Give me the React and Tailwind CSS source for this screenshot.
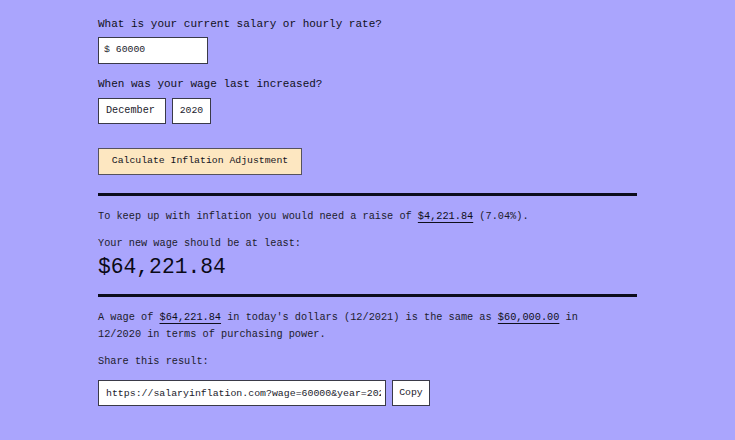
import React from "react";

const mono = { fontFamily: '"Liberation Mono", "DejaVu Sans Mono", monospace' };

export default function App() {
  return (
    <div className="min-h-[440px] w-full bg-[#aaa5fd] text-[#14141f]" style={mono}>
      <div className="mx-auto w-[539px] pt-[16px] pb-[34px]">
        <div className="text-[11px] leading-[16px] text-[#10101a]">What is your current salary or hourly rate?</div>
        <div className="mt-[5px] flex h-[27px] w-[110px] items-center border-[1.5px] border-[#3a3a48] bg-white pl-[5px] text-[9.8px] text-[#22222c]">
          $ 60000
        </div>

        <div className="mt-[12px] text-[11px] leading-[16px] text-[#10101a]">When was your wage last increased?</div>
        <div className="mt-[6px] flex gap-[6px]">
          <div className="flex h-[26px] w-[68px] items-center border-[1.5px] border-[#3a3a48] bg-white pl-[7px] text-[10.2px] text-[#22222c]">
            December
          </div>
          <div className="flex h-[26px] w-[39px] items-center justify-center border-[1.5px] border-[#3a3a48] bg-white text-[9.8px] text-[#22222c]">
            2020
          </div>
        </div>

        <button className="mt-[24px] flex h-[27px] w-[204px] items-center justify-center border-[1.5px] border-[#55525e] bg-[#fde7c1] text-[9.8px] text-[#14141c]" style={mono}>
          Calculate Inflation Adjustment
        </button>

        <div className="mt-[18px] h-[3px] w-full bg-[#0c0c1c]" />

        <div className="mt-[12px] text-[10.25px] leading-[16px] text-[#1c1c2c]">
          To keep up with inflation you would need a raise of{" "}
          <span className="text-[#0e0e1a] underline decoration-1 underline-offset-[3px]">$4,221.84</span> (7.04%).
        </div>

        <div className="mt-[11px] text-[10.25px] leading-[16px] text-[#1c1c2c]">Your new wage should be at least:</div>
        <div className="mt-[3px] text-[21.3px] leading-[26px] text-[#0a0a16]">$64,221.84</div>

        <div className="mt-[14px] h-[3px] w-full bg-[#0c0c1c]" />

        <div className="mt-[12px] text-[10.25px] leading-[16.6px] text-[#1c1c2c]">
          A wage of <span className="text-[#0e0e1a] underline decoration-1 underline-offset-[3px]">$64,221.84</span> in
          today's dollars (12/2021) is the same as{" "}
          <span className="text-[#0e0e1a] underline decoration-1 underline-offset-[3px]">$60,000.00</span> in
          <br />
          12/2020 in terms of purchasing power.
        </div>

        <div className="mt-[11px] text-[10.25px] leading-[16px] text-[#1c1c2c]">Share this result:</div>

        <div className="mt-[11px] flex gap-[6px]">
          <input
            readOnly
            value="https://salaryinflation.com?wage=60000&year=2020&month=12"
            className="h-[26px] w-[288px] border-[1.5px] border-[#3a3a48] bg-white pl-[7px] pr-[4px] text-[9.9px] text-[#22222c] outline-none"
            style={mono}
          />
          <button className="flex h-[26px] w-[38px] items-center justify-center border-[1.5px] border-[#3a3a48] bg-white text-[9.8px] text-[#22222c]" style={mono}>
            Copy
          </button>
        </div>
      </div>
    </div>
  );
}
